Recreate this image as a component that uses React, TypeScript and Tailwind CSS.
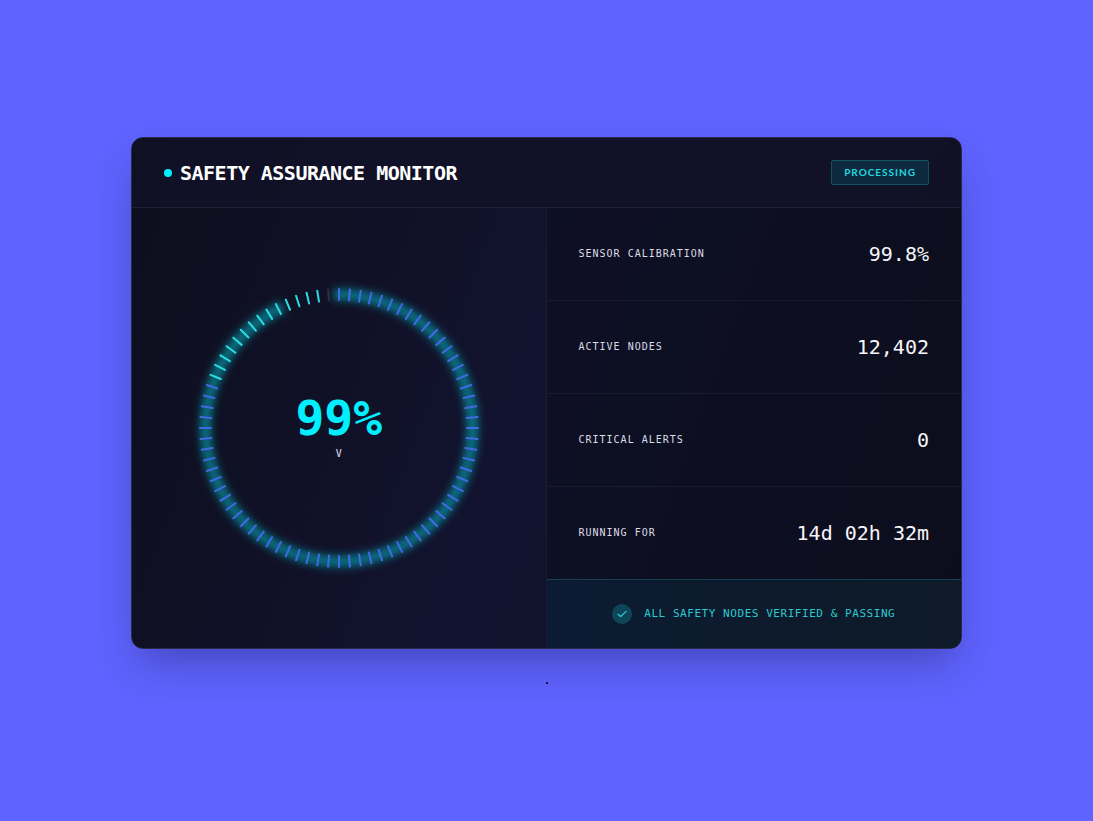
import React from "react";

const TICK_COUNT = 80;
const FIRST_CYAN = 65;
const LAST_GLOWING = 74;
const LAST_LIT = 78;

const metrics = [
  { label: "SENSOR CALIBRATION", value: "99.8%" },
  { label: "ACTIVE NODES", value: "12,402" },
  { label: "CRITICAL ALERTS", value: "0" },
  { label: "RUNNING FOR", value: "14d 02h 32m" },
];

function tickColor(i: number) {
  if (i > LAST_LIT) return "#302e45";
  return i >= FIRST_CYAN ? "#2cdce2" : "#4169e4";
}

function Gauge() {
  const ticks = Array.from({ length: TICK_COUNT }, (_, i) => i);
  const line = (i: number, color: string, width: number, cap: "round" | "butt", opacity = 1) => (
    <line
      key={i}
      x1="160"
      y1="21"
      x2="160"
      y2="32"
      strokeLinecap={cap}
      stroke={color}
      strokeWidth={width}
      strokeOpacity={opacity}
      transform={`rotate(${(i * 360) / TICK_COUNT} 160 160)`}
    />
  );
  return (
    <svg viewBox="0 0 320 320" className="col-start-1 row-start-1 size-80" aria-hidden="true">
      <defs>
        <filter id="glow" x="-20%" y="-20%" width="140%" height="140%">
          <feGaussianBlur stdDeviation="4" />
        </filter>
      </defs>
      <g filter="url(#glow)">
        {ticks.filter((i) => i <= LAST_GLOWING).map((i) => line(i, "#00f0ff", 8, "butt", 0.6))}
      </g>
      {ticks.map((i) => line(i, tickColor(i), 2, "round"))}
    </svg>
  );
}

export default function App() {
  return (
    <main className="flex min-h-screen flex-col items-center justify-center bg-[#5f63ff] p-4 font-['DejaVu_Sans_Mono',monospace]">
      <section className="w-full max-w-[831px] overflow-hidden rounded-xl border border-[#292a4c] bg-linear-110 from-[#0d0e1c] via-[#12132f] to-[#0d0d1a] shadow-[0_20px_40px_-8px_rgba(20,20,60,0.35)]">
        <header className="flex items-center justify-between border-b border-[#1f2038] bg-[#111228]/80 px-8 py-[22px]">
          <div className="flex items-center gap-2">
            <span className="size-2 rounded-full bg-[#00f0ff]" />
            <h1 className="text-xl leading-6 font-bold tracking-tight text-white">SAFETY ASSURANCE MONITOR</h1>
          </div>
          <span className="rounded-xs border border-[#125363] bg-[#0d293d] px-3 py-1 font-[Lato,sans-serif] text-[10px] leading-[15px] font-bold tracking-widest text-[#20d9e0]">
            PROCESSING
          </span>
        </header>
        <div className="grid md:grid-cols-2">
          <div className="grid place-items-center border-r border-[#1b1c36]">
            <Gauge />
            <div className="col-start-1 row-start-1 flex flex-col items-center gap-1">
              <p className="text-5xl leading-[48px] font-bold text-[#00f0ff]">99%</p>
              <p className="text-[10px] leading-4 text-[#e2e2ec]">V</p>
            </div>
          </div>
          <div className="flex flex-col bg-[#0c0d1e]/60">
            <dl>
              {metrics.map((m, i) => (
                <div
                  key={m.label}
                  className={`flex items-center justify-between px-8 py-8 ${i < 3 ? "border-b border-[#191a2c]" : ""}`}
                >
                  <dt className="text-[10px] leading-4 tracking-widest text-[#dcdce6]">{m.label}</dt>
                  <dd className="text-xl leading-7 text-[#f5f5fa]">{m.value}</dd>
                </div>
              ))}
            </dl>
            <footer className="flex items-center justify-center gap-3 border-t border-[#124052] bg-linear-to-r from-[#0c1b32] to-[#0e1a28] py-6 text-[#2cc9d0]">
              <span className="flex size-5 items-center justify-center rounded-full bg-[#0d4658]">
                <svg viewBox="0 0 12 12" className="size-3" fill="none" stroke="currentColor" strokeWidth="1.3" aria-hidden="true">
                  <path d="M2 6.2 L4.6 8.6 L10 3.4" strokeLinecap="round" strokeLinejoin="round" />
                </svg>
              </span>
              <p className="text-[11px] leading-4 tracking-wider">ALL SAFETY NODES VERIFIED &amp; PASSING</p>
            </footer>
          </div>
        </div>
      </section>
      <span className="mt-[33px] size-0.5 rounded-full bg-black" />
    </main>
  );
}
